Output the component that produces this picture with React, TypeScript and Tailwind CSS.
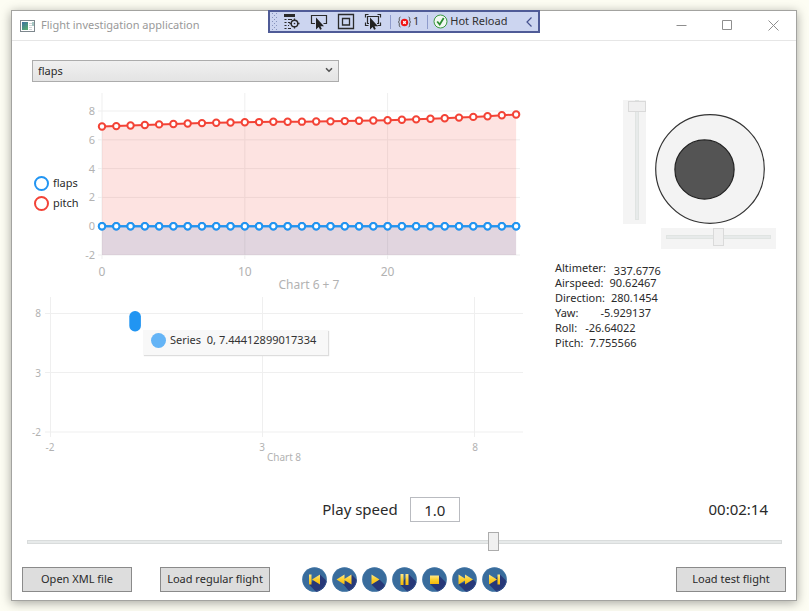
import React, { useState } from "react";
import { ChevronDown } from "lucide-react";

const pitchSeries = [
  6.92, 6.95, 6.99, 7.03, 7.07, 7.1, 7.13, 7.16, 7.18, 7.2, 7.22, 7.23, 7.25, 7.25, 7.26,
  7.27, 7.28, 7.3, 7.32, 7.34, 7.36, 7.39, 7.42, 7.46, 7.5, 7.54, 7.59, 7.64, 7.7, 7.76,
];
const flapsSeries = pitchSeries.map(() => 0);

const px = (i: number) => 22 + i * 14.28;
const py = (v: number) => 136.2 - v * 14.4;

function Series({ values, color, fill }: { values: number[]; color: string; fill: string }) {
  const points = values.map((v, i) => `${px(i)},${py(v)}`).join(" ");
  return (
    <g>
      <polygon points={`${px(0)},165 ${points} ${px(values.length - 1)},165`} fill={fill} fillOpacity="0.15" />
      <polyline points={points} fill="none" stroke={color} strokeWidth="2" />
      {values.map((v, i) => (
        <circle key={i} cx={px(i)} cy={py(v)} r="3.2" fill="#fff" stroke={color} strokeWidth="2" />
      ))}
    </g>
  );
}

function HistoryChart() {
  return (
    <svg viewBox="0 0 443 205" className="block h-auto min-w-0 flex-1" role="img" aria-label="Chart 6 + 7">
      <g stroke="#efefef" strokeWidth="1">
        {[8, 6, 4, 2, 0, -2].map((v) => (
          <line key={v} x1="18" x2="440" y1={py(v)} y2={py(v)} />
        ))}
        {[0, 10, 20].map((v) => (
          <line key={v} x1={px(v)} x2={px(v)} y1="3" y2="169" />
        ))}
      </g>
      <Series values={flapsSeries} color="#2195f2" fill="#2195f2" />
      <Series values={pitchSeries} color="#f34336" fill="#f34336" />
      <Series values={flapsSeries} color="#2195f2" fill="none" />
      <g fill="#b2b2b2" fontSize="11" textAnchor="end">
        {[8, 6, 4, 2, 0, -2].map((v) => (
          <text key={v} x="15" y={py(v) + 4}>{v}</text>
        ))}
      </g>
      <g fill="#b2b2b2" fontSize="12" textAnchor="middle">
        {[0, 10, 20].map((v) => (
          <text key={v} x={px(v)} y="186">{v}</text>
        ))}
        <text x="229" y="199">Chart 6 + 7</text>
      </g>
    </svg>
  );
}

function ScatterChart() {
  return (
    <div className="relative">
      <svg viewBox="0 0 491 170" className="block h-auto w-full" role="img" aria-label="Chart 8">
        <g stroke="#efefef" strokeWidth="1">
          {[18.5, 77.5, 137].map((y) => (
            <line key={y} x1="13" x2="491" y1={y} y2={y} />
          ))}
          {[18.5, 230.5, 442.5].map((x) => (
            <line key={x} x1={x} x2={x} y1="2" y2="142" />
          ))}
        </g>
        <rect x="97.3" y="16" width="11.6" height="20.5" rx="5.6" fill="#2195f2" />
        <g fill="#b2b2b2" fontSize="10">
          <g textAnchor="end">
            <text x="9" y="22">8</text>
            <text x="9" y="82">3</text>
            <text x="9" y="141">-2</text>
          </g>
          <g textAnchor="middle">
            <text x="18" y="156">-2</text>
            <text x="230" y="156">3</text>
            <text x="443" y="156">8</text>
            <text x="252" y="166">Chart 8</text>
          </g>
        </g>
      </svg>
      <div
        role="tooltip"
        className="absolute top-[35px] left-[111px] flex h-[25px] items-center gap-1 bg-[#f8f8f8]/95 pr-3 pb-1 pl-2 text-[11px] whitespace-pre text-[#333] shadow-[1px_1px_1px_#ddd]"
      >
        <span className="size-[15px] rounded-full bg-[#64b4f6]" />
        <span>Series  0, 7.44412899017334</span>
      </div>
    </div>
  );
}

function LegendItem({ label, ring }: { label: string; ring: string }) {
  return (
    <li className="flex h-5 items-center gap-1">
      <span className={`size-[15px] shrink-0 rounded-full border-2 bg-white ${ring}`} />
      {label}
    </li>
  );
}

const readouts = [
  { label: "Altimeter:", value: "337.6776", space: "ml-2 pt-[3px]" },
  { label: "Airspeed:", value: "90.62467", space: "ml-1.5" },
  { label: "Direction:", value: "280.1454", space: "ml-1.5" },
  { label: "Yaw:", value: "-5.929137", space: "ml-[22px]" },
  { label: "Roll:", value: "-26.64022", space: "ml-2" },
  { label: "Pitch:", value: "7.755566", space: "ml-1.5" },
];

function Instruments() {
  return (
    <div className="flex flex-col items-end">
      <div className="flex items-end gap-[9px] pr-[11px]">
        <div className="flex h-[124px] w-[23px] justify-end bg-[#f4f4f4] pb-1">
          <input
            type="range"
            aria-label="Throttle"
            min={0}
            max={100}
            defaultValue={100}
            className="m-0 h-full w-[18px] appearance-none bg-transparent [direction:rtl] [writing-mode:vertical-lr] [&::-webkit-slider-runnable-track]:w-1 [&::-webkit-slider-runnable-track]:border [&::-webkit-slider-runnable-track]:border-[#e0e4e2] [&::-webkit-slider-runnable-track]:bg-[#e7eaea] [&::-webkit-slider-thumb]:ml-[-8px] [&::-webkit-slider-thumb]:h-[11px] [&::-webkit-slider-thumb]:w-[18px] [&::-webkit-slider-thumb]:appearance-none [&::-webkit-slider-thumb]:border [&::-webkit-slider-thumb]:border-[#dadada] [&::-webkit-slider-thumb]:bg-[#f0f0f0]"
          />
        </div>
        <svg viewBox="0 0 110 110" className="size-[110px]" role="img" aria-label="Joystick">
          <circle cx="55" cy="55" r="54.3" fill="#f3f3f3" stroke="#333" strokeWidth="1.2" />
          <circle cx="49.500" cy="55.500" r="29.600" fill="#545454" stroke="#222" strokeWidth="1.2" />
        </svg>
      </div>
      <div className="mt-1 flex h-[21px] w-[115px] bg-[#f4f4f4] px-[5px]">
        <input
          type="range"
          aria-label="Rudder"
          min={0}
          max={100}
          defaultValue={50}
          className="m-0 h-[18px] w-full appearance-none bg-transparent [&::-webkit-slider-runnable-track]:h-1 [&::-webkit-slider-runnable-track]:border [&::-webkit-slider-runnable-track]:border-[#e0e4e2] [&::-webkit-slider-runnable-track]:bg-[#e7eaea] [&::-webkit-slider-thumb]:mt-[-8px] [&::-webkit-slider-thumb]:h-[18px] [&::-webkit-slider-thumb]:w-[11px] [&::-webkit-slider-thumb]:appearance-none [&::-webkit-slider-thumb]:border [&::-webkit-slider-thumb]:border-[#dadada] [&::-webkit-slider-thumb]:bg-[#f0f0f0]"
        />
      </div>
      <dl className="mt-[11px] w-full text-[11px] leading-[15px]">
        {readouts.map((r) => (
          <div key={r.label} className="flex h-[15px]">
            <dt>{r.label}</dt>
            <dd className={r.space}>{r.value}</dd>
          </div>
        ))}
      </dl>
    </div>
  );
}

const players = [
  { name: "Skip to start", d: "M7 7.500h2.500v10H7zM18 7.500v10l-8-5z", shade: "M7 17.500 18 7.500 30 19v11H19z" },
  { name: "Rewind", d: "M12.500 7.500v10l-8-5zM19.500 7.500v10l-8-5z", shade: "M11 17 19.500 7.500 30 18v12H22z" },
  { name: "Play", d: "M9.500 7.500 17.500 12.500 9.500 17.500z", shade: "M9.500 17.500 17.500 12.500 30 25v5H22z" },
  { name: "Pause", d: "M8.500 7h3v11h-3zM13.500 7h3v11h-3z", shade: "M8.500 18 16.500 7 30 20.500V30H20.500z" },
  { name: "Stop", d: "M8 8.500h9v8.500H8z", shade: "M8 17 17 8.500 30 21.500V30H21z" },
  { name: "Fast forward", d: "M6.500 7.500v10l8-5zM13 7.500v10l8-5z", shade: "M6.500 17.500 21 12.500 30 21.500V30H19z" },
  { name: "Skip to end", d: "M7 7.500v10l8-5zM15.500 7.500H18v10h-2.500z", shade: "M7 17.500 18 7.500 30 19.500V30H19.500z" },
];

function PlayerButtons() {
  return (
    <div className="flex gap-[5px]">
      <svg className="absolute size-0" aria-hidden="true">
        <defs>
          <linearGradient id="gold" x1="0" y1="0" x2="0" y2="1">
            <stop offset="0" stopColor="#ffe88a" />
            <stop offset="0.500" stopColor="#fccf2c" />
            <stop offset="1" stopColor="#f5b70c" />
          </linearGradient>
          <clipPath id="disc">
            <circle cx="12.500" cy="12.500" r="12.300" />
          </clipPath>
        </defs>
      </svg>
      {players.map((p) => (
        <button key={p.name} type="button" aria-label={p.name} className="size-[25px] rounded-full">
          <svg viewBox="0 0 25 25" className="block size-[25px]">
            <g clipPath="url(#disc)">
              <rect width="25" height="25" fill="#396c9c" />
              <path d={p.shade} fill="#273878" />
              <circle cx="12.500" cy="12.500" r="11.900" fill="none" stroke="#4d86b5" strokeOpacity="0.3" />
            </g>
            <path d={p.d} fill="url(#gold)" />
          </svg>
        </button>
      ))}
    </div>
  );
}

const toolButton = "flex h-[19px] items-center";

function DebugToolbar() {
  return (
    <div
      role="toolbar"
      aria-label="Debug tools"
      className="absolute -top-px left-1/2 flex h-[23px] w-[272px] -translate-x-1/2 items-center border-2 border-[#4f5b97] bg-[#ccd5f0] text-[11px] text-[#303030]"
    >
      <svg width="8" height="19" viewBox="0 0 8 19" fill="#8793bd" aria-hidden="true">
        {[1, 5, 9, 13, 17].map((y) => (
          <g key={y}>
            <rect x="2" y={y} width="1" height="1" />
            <rect x="6" y={y} width="1" height="1" />
            <rect x="4" y={y + 2} width="1" height="1" />
          </g>
        ))}
      </svg>
      <div className="ml-[5px] flex gap-[9px]">
        <button type="button" aria-label="Go to live visual tree" className={toolButton}>
          <svg width="18" height="18" viewBox="0 0 18 18" fill="none" stroke="#2b2b2b">
            <path d="M1 2.500h11" strokeWidth="3" />
            <path d="M1.500 6.500h2M1.500 9.500h2M1.500 12.500h2M1.500 15.500h2M5 6.500h4M5 9.500h2M5 12.500h1M5 15.500h3" strokeWidth="1.2" />
            <circle cx="11.500" cy="10.500" r="3.300" strokeWidth="1.4" />
            <circle cx="11.500" cy="10.500" r="0.800" fill="#2b2b2b" stroke="none" />
            <path d="M11.500 5.500v2.500M11.500 13v2.500M6.500 10.500H9M14 10.500h2.500" strokeWidth="1.3" />
          </svg>
        </button>
        <button type="button" aria-label="Select element" className={toolButton}>
          <svg width="18" height="18" viewBox="0 0 18 18">
            <path d="M5 10.500H1.500v-8h15v8h-3" fill="none" stroke="#2b2b2b" strokeWidth="1.2" />
            <path d="M6 4.500v12l2.700-2.500 1.400 2.800 1.700-.800-1.300-2.700h3.500z" fill="#222" />
          </svg>
        </button>
        <button type="button" aria-label="Display layout adorners" className={toolButton}>
          <svg width="18" height="18" viewBox="0 0 18 18" fill="none" stroke="#2b2b2b" strokeWidth="1.3">
            <path d="M1.500 1.500h15v14h-15z" />
            <path d="M5.500 5.500h7v6.500h-7z" />
          </svg>
        </button>
        <button type="button" aria-label="Track focused element" className={toolButton}>
          <svg width="18" height="18" viewBox="0 0 18 18">
            <path d="M1.500 4.500v-3h3M13.500 1.500h3v3M1.500 9.500v3h3M13.500 12.500h3v-3M5 10.500H3.500v-7h11v7H13" fill="none" stroke="#2b2b2b" strokeWidth="1.200" />
            <path d="M6 4.500v12l2.700-2.500 1.400 2.800 1.700-.800-1.300-2.700h3.500z" fill="#222" />
          </svg>
        </button>
      </div>
      <span className="ml-2 h-[14px] w-px bg-[#8e9bcb]" />
      <button type="button" aria-label="1 binding failure" className="ml-1.5 flex items-center gap-px">
        <svg width="15" height="14" viewBox="0 0 15 14" fill="none">
          <path d="M3.500 2C1.500 2 2.500 5.500 2.300 6.200 2.100 6.800 1 7 1 7s1.100.200 1.300.800C2.500 8.500 1.500 12 3.500 12M11.500 2c2 0 1 3.500 1.200 4.200.2.600 1.300.800 1.300.800s-1.100.200-1.300.800c-.2.700.8 4.200-1.200 4.200" stroke="#555" />
          <circle cx="7.500" cy="7.500" r="3.700" fill="#f01414" />
          <path d="m6.200 6.200 2.600 2.600m0-2.600-2.600 2.600" stroke="#fff" strokeWidth="1.300" />
        </svg>
        1
      </button>
      <span className="ml-2 h-[14px] w-px bg-[#8e9bcb]" />
      <button type="button" className="ml-[5px] flex items-center gap-0.5">
        <svg width="15" height="15" viewBox="0 0 15 15" fill="none">
          <circle cx="7.500" cy="7.500" r="6.500" fill="#f2f8f2" stroke="#3a9a3f" />
          <path d="m4.200 7.500 2.500 3 4-6.500" stroke="#2c8c32" strokeWidth="1.800" />
        </svg>
        Hot Reload
      </button>
      <button type="button" aria-label="Collapse toolbar" className="mr-[5px] ml-auto">
        <svg width="8" height="12" viewBox="0 0 8 12" fill="none" stroke="#46528f" strokeWidth="1.2">
          <path d="M6.500 1.500 2 6l4.500 4.500" />
        </svg>
      </button>
    </div>
  );
}

const fileButton = "h-[25px] w-[110px] border border-[#8a8a8a] bg-[#dddddd] text-[11px] whitespace-nowrap";

export default function App() {
  const [speed, setSpeed] = useState("1.0");
  return (
    <div className="flex min-h-screen bg-[#fdfdf3] pt-[10px] pr-3 pb-[10px] pl-[11px] font-['Noto_Sans','Open_Sans',sans-serif] text-[#2a2a2a]">
      <main className="relative flex flex-1 flex-col border border-[#a3a3a0] bg-white shadow-[0_2px_10px_rgba(0,0,0,0.35)]">
        <header className="flex h-[30px] items-center border-b border-[#e6e6e6] pl-2">
          <svg width="15" height="12" viewBox="0 0 15 12" aria-hidden="true">
            <defs>
              <linearGradient id="screen" x1="0" y1="0" x2="0.6" y2="1">
                <stop offset="0" stopColor="#3b6fa0" />
                <stop offset="1" stopColor="#55a873" />
              </linearGradient>
            </defs>
            <rect x="0.500" y="0.500" width="14" height="11" fill="#fff" stroke="#7d878d" />
            <rect x="2" y="2" width="6" height="8" fill="url(#screen)" />
            <path d="M9 3.500h3M9 5.500h3M9 7.500h3M9 9.500h3" stroke="#d0d4d6" />
            <path d="M13 2v4" stroke="#4c8f86" />
          </svg>
          <h1 className="ml-1.5 text-[11px] text-[#999]">Flight investigation application</h1>
          <div className="ml-auto flex h-full text-[#8e8e8e]">
            <button type="button" aria-label="Minimize" className="grid w-[46px] place-items-center">
              <svg width="11" height="11" viewBox="0 0 11 11" stroke="currentColor"><path d="M.5 5.500h10" /></svg>
            </button>
            <button type="button" aria-label="Maximize" className="grid w-[46px] place-items-center">
              <svg width="11" height="11" viewBox="0 0 11 11" fill="none" stroke="currentColor"><path d="M.5.500h9v9h-9z" /></svg>
            </button>
            <button type="button" aria-label="Close" className="grid w-[46px] place-items-center">
              <svg width="11" height="11" viewBox="0 0 11 11" stroke="currentColor"><path d="m.5.500 10 10m0-10-10 10" /></svg>
            </button>
          </div>
        </header>
        <DebugToolbar />

        <div className="grid grid-cols-[minmax(0,1fr)_221px] gap-x-8 px-5 pt-[19px]">
          <section>
            <div className="relative w-[307px]">
              <select
                aria-label="Property"
                defaultValue="flaps"
                className="block h-[22px] w-full appearance-none rounded-none border border-[#acacac] bg-linear-to-b from-[#f0f0f0] to-[#e4e4e4] px-[5px] text-[11px]"
              >
                <option>flaps</option>
                <option>pitch</option>
              </select>
              <ChevronDown className="pointer-events-none absolute top-[5px] right-[5px] size-[10px] text-[#555]" strokeWidth={4} />
            </div>
            <div className="mt-2 flex items-center">
              <ul className="w-12 shrink-0 pt-0.5 pl-0.5 text-[11px]">
                <LegendItem label="flaps" ring="border-[#2195f2]" />
                <LegendItem label="pitch" ring="border-[#f34336]" />
              </ul>
              <HistoryChart />
            </div>
            <ScatterChart />
          </section>
          <aside className="pt-10">
            <Instruments />
          </aside>
        </div>

        <div className="mt-auto pb-2">
          <div className="grid grid-cols-[1fr_auto_1fr] items-center px-7">
            <div className="col-start-2 flex items-center gap-3 pr-[26px]">
              <label htmlFor="speed" className="text-[15px]">Play speed</label>
              <input
                id="speed"
                value={speed}
                onChange={(e) => setSpeed(e.target.value)}
                className="h-[25px] w-[50px] border border-[#b9bbc0] text-center text-[15px]"
              />
            </div>
            <time className="justify-self-end text-[15px]">00:02:14</time>
          </div>
          <div className="mt-2.5 flex pr-[14px] pl-[15px]">
            <input
              type="range"
              aria-label="Playback position"
              min={0}
              max={1000}
              defaultValue={620}
              className="m-0 h-[19px] w-full appearance-none bg-transparent [&::-webkit-slider-runnable-track]:h-1 [&::-webkit-slider-runnable-track]:border [&::-webkit-slider-runnable-track]:border-[#d9dcdc] [&::-webkit-slider-runnable-track]:bg-[#e7eaea] [&::-webkit-slider-thumb]:mt-[-9px] [&::-webkit-slider-thumb]:h-[19px] [&::-webkit-slider-thumb]:w-[11px] [&::-webkit-slider-thumb]:appearance-none [&::-webkit-slider-thumb]:border [&::-webkit-slider-thumb]:border-[#acacac] [&::-webkit-slider-thumb]:bg-[#f0f0f0]"
            />
          </div>
          <div className="mt-4 grid grid-cols-[1fr_auto_1fr] items-center px-[10px]">
            <div className="flex gap-7">
              <button type="button" className={fileButton}>Open XML file</button>
              <button type="button" className={fileButton}>Load regular flight</button>
            </div>
            <PlayerButtons />
            <button type="button" className={`${fileButton} justify-self-end`}>Load test flight</button>
          </div>
        </div>
      </main>
    </div>
  );
}
